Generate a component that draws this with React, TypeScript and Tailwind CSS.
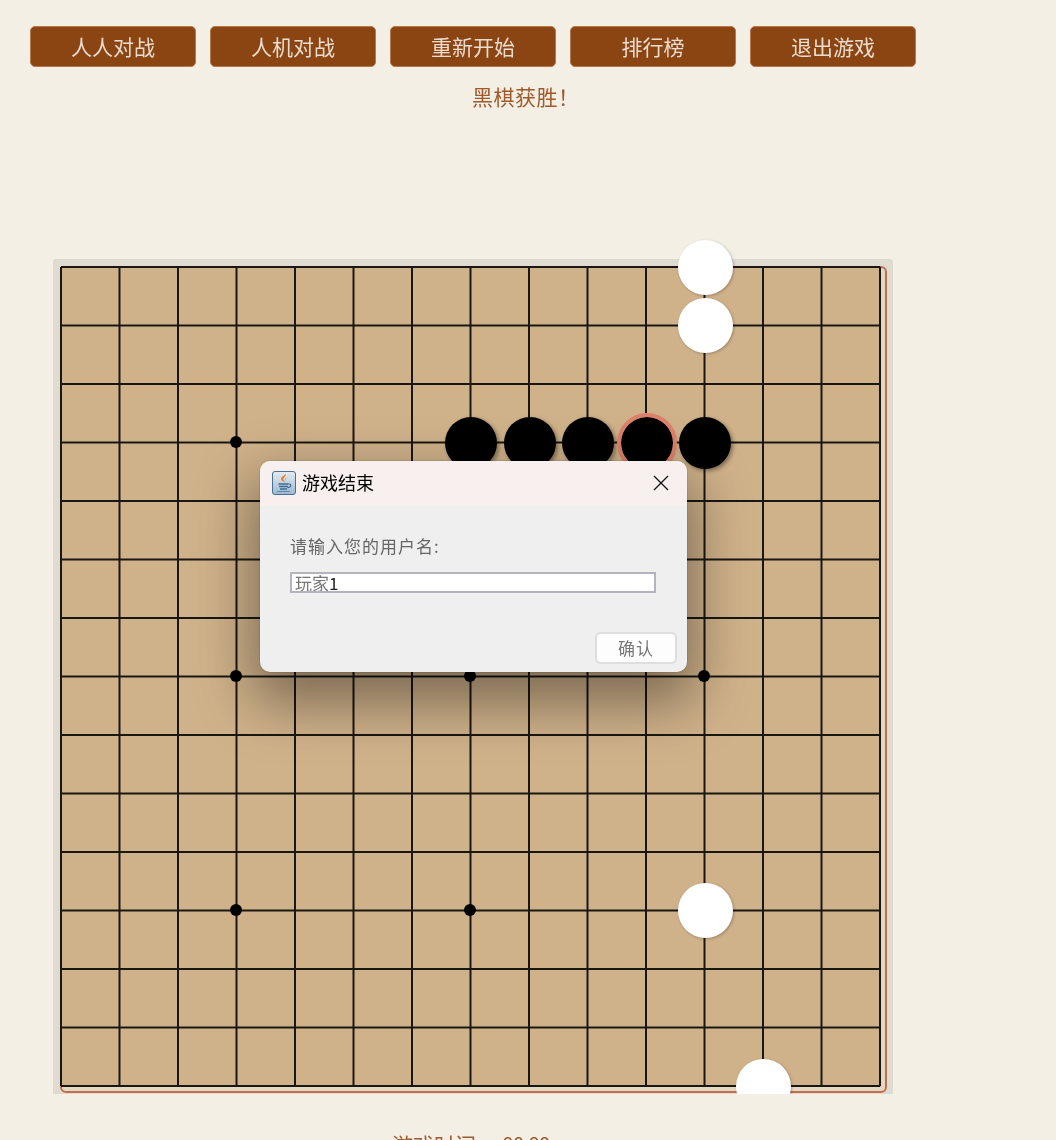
import React from "react";

const CELL = 58.5;
const ORIGIN_X = 8;
const ORIGIN_Y = 8;
const LINES = Array.from({ length: 15 }, (_, i) => i);

const buttons = ["人人对战", "人机对战", "重新开始", "排行榜", "退出游戏"];

const stones = [
  { x: 11, y: 0, color: "white" },
  { x: 11, y: 1, color: "white" },
  { x: 7, y: 3, color: "black" },
  { x: 8, y: 3, color: "black" },
  { x: 9, y: 3, color: "black" },
  { x: 10, y: 3, color: "black", last: true },
  { x: 11, y: 3, color: "black" },
  { x: 11, y: 11, color: "white" },
  { x: 12, y: 14, color: "white" },
];

const starPoints = [
  [3, 3],
  [7, 3],
  [11, 3],
  [3, 7],
  [7, 7],
  [11, 7],
  [3, 11],
  [7, 11],
  [11, 11],
];

const BoardLines = () => (
  <svg className="absolute inset-0" width={840} height={835}>
    {LINES.map((i) => (
      <g key={i} stroke="#1a1712" strokeWidth={2}>
        <line
          x1={ORIGIN_X + i * CELL}
          y1={ORIGIN_Y}
          x2={ORIGIN_X + i * CELL}
          y2={ORIGIN_Y + 14 * CELL}
        />
        <line
          x1={ORIGIN_X}
          y1={ORIGIN_Y + i * CELL}
          x2={ORIGIN_X + 14 * CELL}
          y2={ORIGIN_Y + i * CELL}
        />
      </g>
    ))}
    {starPoints.map(([x, y]) => (
      <circle
        key={`${x}-${y}`}
        cx={ORIGIN_X + x * CELL - 0.5}
        cy={ORIGIN_Y + y * CELL - 0.5}
        r={6}
        fill="#000"
      />
    ))}
  </svg>
);

const JavaIcon = () => (
  <svg width="24" height="24" viewBox="0 0 24 24">
    <defs>
      <linearGradient id="javaBox" x1="0" y1="0" x2="0" y2="1">
        <stop offset="0" stopColor="#e6ebf0" />
        <stop offset="1" stopColor="#9dbad2" />
      </linearGradient>
    </defs>
    <rect x="0.5" y="0.5" width="23" height="23" rx="2.5" fill="url(#javaBox)" stroke="#4a6f92" />
    <path d="M13.500 2.500c1.500 2.500-3 4-2 6.500.4 1 1.200 1.700 1.600 2.300-2.200-.6-4.600-2.300-3.800-4.500.6-1.700 4-2.400 4.200-4.300z" fill="#e57f22" />
    <path d="M16 6c-1.800 1-3 2-2 3.800-1-.6-1.500-2.600 2-3.800z" fill="#e57f22" />
    <path d="M6.500 13h10M7 15.500h9M8 18h7" stroke="#3f6c94" strokeWidth="1.500" fill="none" />
    <path d="M16.500 13c3-.5 3.500 2.800-1 3.800" stroke="#3f6c94" strokeWidth="1.100" fill="none" />
    <path d="M5 20.500h13" stroke="#5f88aa" strokeWidth="1.100" />
  </svg>
);

const GameOverDialog = () => (
  <div className="absolute left-[207px] top-[202px] flex h-[211px] w-[427px] flex-col overflow-hidden rounded-[10px] bg-[#efefef] shadow-[0_24px_56px_8px_rgba(0,0,0,0.4)] outline outline-[#00000012]">
    <div className="flex h-[45px] items-center bg-[#f8f0ef] pb-[2px] pl-3 pr-[18px]">
      <JavaIcon />
      <span className="ml-[6px] text-[18px] text-black">游戏结束</span>
      <svg className="ml-auto" width="16" height="16" viewBox="0 0 16 16">
        <path d="M1 1l14 14M15 1L1 15" stroke="#111" strokeWidth="1.300" fill="none" />
      </svg>
    </div>
    <div className="flex flex-1 flex-col pl-[30px] pr-[10px]">
      <p className="mt-[28px] text-[17px] leading-[24px] tracking-[1px] text-[#666]">
        请输入您的用户名:
      </p>
      <div className="mt-[14px] flex h-[21px] w-[366px] items-center overflow-hidden border-2 border-[#b4b4bc] bg-white pl-[3px] text-[17px] text-[#777]">
        玩家<span className="text-[#222]">1</span>
      </div>
      <button className="mt-auto mb-[8px] ml-auto h-[32px] w-[82px] rounded-[5px] border-2 border-[#dedede] bg-[#fdfdfd] text-[17px] tracking-[1px] text-[#777]">
        确认
      </button>
    </div>
  </div>
);

export default function App() {
  return (
    <div className="h-[1140px] w-[1056px] overflow-hidden bg-[#f3efe4] font-['Noto_Sans_CJK_SC','Liberation_Sans',sans-serif] blur-[0.5px]">
      <div className="flex gap-[14px] pl-[30px] pt-[26px]">
        {buttons.map((label) => (
          <button
            key={label}
            className="h-[41px] w-[166px] rounded-[5px] border border-[#b5784f] bg-[#8b4513] text-[21px] leading-none text-[#eadccf]"
          >
            {label}
          </button>
        ))}
      </div>
      <p className="mt-[14px] pl-[472px] text-[21px] leading-[30px] tracking-[0.5px] text-[#a05a2c]">黑棋获胜！</p>

      <div className="relative ml-[53px] mt-[148px] h-[835px] w-[840px] rounded-t-[3px] bg-[#e0dbd0] [clip-path:inset(-40px_0_0_0)]">
        <div className="absolute left-[7px] top-[7px] h-[827px] w-[827px] rounded-[6px] border-2 border-[#c26f4e] bg-[#e3d8c6]" />
        <div className="absolute left-[8px] top-[8px] h-[820px] w-[820px] bg-[#d0b28a]" />
        <BoardLines />
        {stones.map((stone) => {
          const size = stone.color === "white" ? 55 : 52;
          return (
            <div
              key={`${stone.x}-${stone.y}`}
              className={
                stone.color === "white"
                  ? "absolute rounded-full bg-white shadow-[1px_1px_3px_rgba(0,0,0,0.25)]"
                  : "absolute rounded-full bg-black shadow-[2px_2px_4px_rgba(0,0,0,0.4)]"
              }
              style={{
                width: size,
                height: size,
                left: ORIGIN_X + stone.x * CELL - size / 2 + 0.5,
                top: ORIGIN_Y + stone.y * CELL - size / 2,
                outline: stone.last ? "4px solid #dd806c" : undefined,
              }}
            />
          );
        })}
        <GameOverDialog />
      </div>

      <p className="mt-[35px] pl-[392px] text-[21px] leading-[30px] text-[#a05a2c]">
        游戏时间：<span className="ml-[5px] tracking-[-1px]">00:00</span>
      </p>
    </div>
  );
}
